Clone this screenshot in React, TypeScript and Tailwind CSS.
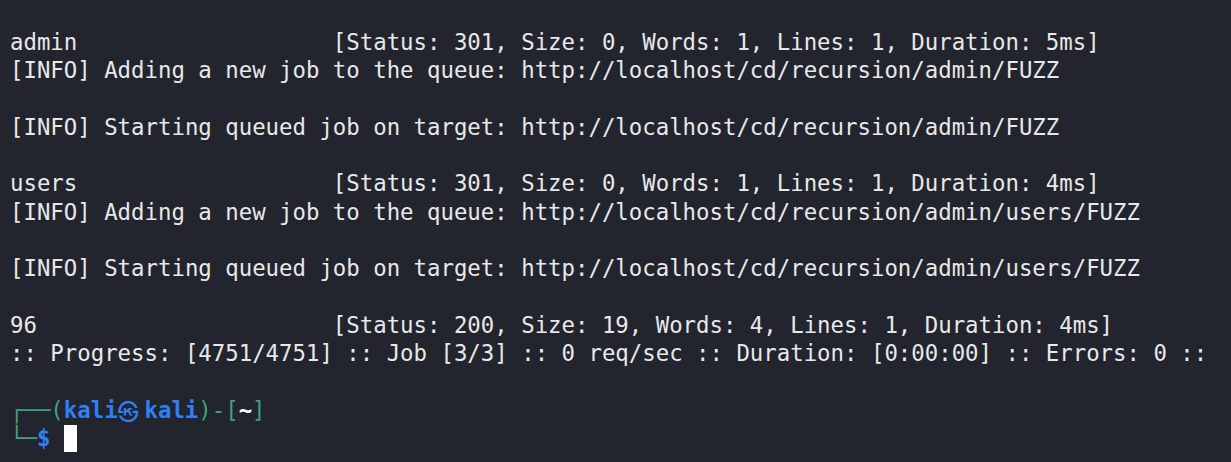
const lines = [
  'admin                   [Status: 301, Size: 0, Words: 1, Lines: 1, Duration: 5ms]',
  '[INFO] Adding a new job to the queue: http://localhost/cd/recursion/admin/FUZZ',
  '',
  '[INFO] Starting queued job on target: http://localhost/cd/recursion/admin/FUZZ',
  '',
  'users                   [Status: 301, Size: 0, Words: 1, Lines: 1, Duration: 4ms]',
  '[INFO] Adding a new job to the queue: http://localhost/cd/recursion/admin/users/FUZZ',
  '',
  '[INFO] Starting queued job on target: http://localhost/cd/recursion/admin/users/FUZZ',
  '',
  '96                      [Status: 200, Size: 19, Words: 4, Lines: 1, Duration: 4ms]',
  ':: Progress: [4751/4751] :: Job [3/3] :: 0 req/sec :: Duration: [0:00:00] :: Errors: 0 ::',
  '',
];

const Terminal = () => {
  return (
    <div className="min-h-[462px] w-full bg-[#23252e] pt-[28px] pl-[10px] text-[#e8e8e8] text-[22.35px] leading-[28.3px] font-['DejaVu_Sans_Mono','Noto_Sans_CJK_KR',monospace] overflow-hidden">
      {lines.map((line, i) => (
        <div key={i} className="h-[28.3px] whitespace-pre">
          {line}
        </div>
      ))}

      {/* zsh prompt */}
      <div className="h-[28.3px] whitespace-pre flex items-center">
        <span className="text-[#3fa27b]">┌──(</span>
        <span className="font-bold text-[#2f7ff5]">kali</span>
        <span className="inline-flex items-center justify-start w-[26.86px] font-bold text-[#2f7ff5] font-['Noto_Sans_CJK_KR',sans-serif] text-[21px] leading-none">㉿</span>
        <span className="font-bold text-[#2f7ff5]">kali</span>
        <span className="text-[#3fa27b]">)-[</span>
        <span className="font-bold text-white">~</span>
        <span className="text-[#3fa27b]">]</span>
      </div>
      <div className="h-[28.3px] whitespace-pre flex items-center">
        <span className="text-[#3fa27b]">└─</span>
        <span className="font-bold text-[#2f7ff5]">$</span>
        <span> </span>
        <span className="inline-block w-[13.4px] h-[27px] bg-white" />
      </div>
    </div>
  );
};

export default function App() {
  return <Terminal />;
}
